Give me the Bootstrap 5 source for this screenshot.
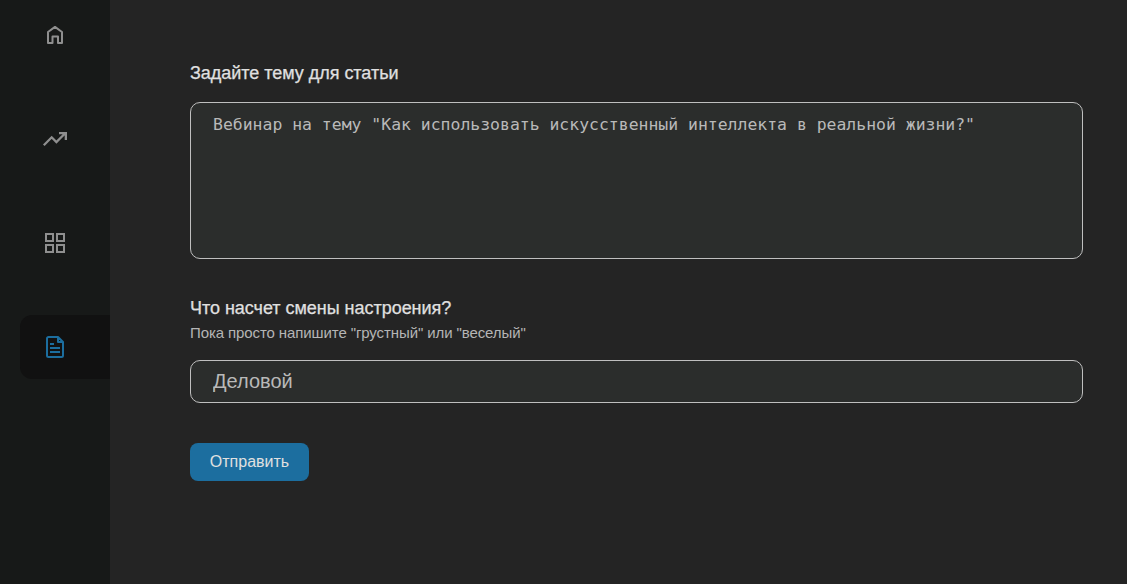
<!DOCTYPE html>
<html lang="ru">
<head>
<meta charset="utf-8">
<meta name="viewport" content="width=device-width, initial-scale=1">
<title>Генератор статей</title>
<link href="https://cdn.jsdelivr.net/npm/bootstrap@5.3.0/dist/css/bootstrap.min.css" rel="stylesheet">
<style>
body{background:#242424;color:#e0e0e0;font-family:"Liberation Sans",Arial,sans-serif}
.side-menu{width:110px;background:#171918;padding:3px 0 0 20px;gap:40px}
.side-menu .nav-link{height:64px;padding:0 20px 0 0;color:#8f8f8f;border-radius:12px 0 0 12px}
.side-menu .nav-link.active{background:#111;color:#1c6e9f}
.side-menu svg{display:block;fill:none;stroke:currentColor;stroke-width:2}
.content-area{padding:62px 44px 0 80px}
.field-title{font-size:18px;line-height:22px;letter-spacing:-.03px;-webkit-text-stroke:.25px currentColor}
.field-hint{font-size:15px;line-height:20px;letter-spacing:-.1px;color:#b5b5b5}
.form-control,.form-control:focus{background:#2b2d2c;border:1px solid #bfbfbf;border-radius:10px;color:#b9b9b9;padding:10px 22px;box-shadow:none}
textarea.form-control{height:157px;margin-top:18px;padding-top:11px;resize:none;font-family:"DejaVu Sans Mono",monospace;font-size:16.44px;line-height:22px}
input.form-control{height:43px;margin-top:17px;font-size:20px;line-height:22px}
.mood-title{margin-top:38px}
.btn-send,.btn-send:hover{width:119px;height:38px;margin-top:40px;background:#1c6e9f;color:#e0e0e0;border:0;border-radius:8px;font-size:16px;line-height:24px}
</style>
</head>
<body>
<div class="d-flex vh-100 overflow-hidden">
  <nav class="side-menu nav flex-column flex-nowrap flex-shrink-0">
    <a class="nav-link d-flex align-items-center justify-content-center" href="#" aria-label="Главная">
      <svg width="24" height="24" viewBox="0 0 24 24"><path stroke-linejoin="round" d="M5 20V9L12 3.9 19 9v11h-4v-6.5H9.500V20z"/></svg>
    </a>
    <a class="nav-link d-flex align-items-center justify-content-center" href="#" aria-label="Статистика">
      <svg width="26" height="24" viewBox="0 0 26 24"><path stroke-width="2.3" d="M1.8 18.2l7.9-7.9 4.700 4.700L23.2 6.200M17 6.100H23.850V13"/></svg>
    </a>
    <a class="nav-link d-flex align-items-center justify-content-center" href="#" aria-label="Панели">
      <svg width="24" height="24" viewBox="0 0 24 24"><path d="M3 3h7v7H3zM14 3h7v7h-7zM3 14h7v7H3zM14 14h7v7h-7z"/></svg>
    </a>
    <a class="nav-link active d-flex align-items-center justify-content-center" href="#" aria-label="Статьи">
      <svg width="24" height="24" viewBox="0 0 24 24"><path stroke-linejoin="round" d="M5.500 2H15l5 5v13.500a1.500 1.500 0 0 1-1.500 1.500h-13A1.500 1.500 0 0 1 4 20.500v-17A1.500 1.500 0 0 1 5.500 2zM15 2v5h5M7 9h4M7 13h10M7 17h10"/></svg>
    </a>
  </nav>
  <main class="content-area flex-grow-1">
    <form>
      <label class="field-title d-block" for="topic">Задайте тему для статьи</label>
      <textarea class="form-control d-block" id="topic" spellcheck="false">Вебинар на тему "Как использовать искусственный интеллекта в реальной жизни?"</textarea>
      <label class="field-title mood-title d-block" for="mood">Что насчет смены настроения?</label>
      <div class="field-hint mt-1">Пока просто напишите "грустный" или "веселый"</div>
      <input class="form-control" id="mood" value="Деловой">
      <button class="btn btn-send p-0 d-block" type="button">Отправить</button>
    </form>
  </main>
</div>
<script src="https://cdn.jsdelivr.net/npm/bootstrap@5.3.0/dist/js/bootstrap.bundle.min.js"></script>
</body>
</html>
